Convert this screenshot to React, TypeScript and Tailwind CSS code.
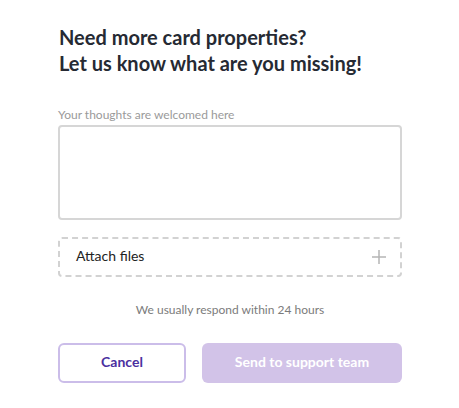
import React from "react";

export default function App() {
  return (
    <div className="w-[459px] h-[408px] bg-white" style={{ fontFamily: "Lato, 'Noto Sans', sans-serif" }}>
      <div className="w-[344px] ml-[58px] pt-[24px] flex flex-col">
        <h1 className="text-[20px] leading-[26px] font-bold text-[#262a33] pl-[1px]">
          Need more card properties?
          <br />
          Let us know what are you missing!
        </h1>
        <label className="mt-[31px] text-[12px] leading-[16px] text-[#9a9a9a]">Your thoughts are welcomed here</label>
        <textarea className="mt-[2px] h-[95px] w-full rounded-[4px] border-2 border-[#d6d6d6] resize-none outline-none" />
        <div className="mt-[17px] h-[40px] rounded-[4px] border-2 border-dashed border-[#d2d2d2] flex items-center justify-between pl-[16px] pr-[13px]">
          <span className="text-[14px] leading-[16px] text-[#222] -mt-[3px]">Attach files</span>
          <svg width="16" height="16" viewBox="0 0 16 16" fill="none" stroke="#b5b5b5" strokeWidth="1.5">
            <path d="M8 1v14M1 8h14" />
          </svg>
        </div>
        <p className="mt-[25px] text-center text-[12px] leading-[16px] text-[#7b7b7b]">We usually respond within 24 hours</p>
        <div className="mt-[25px] flex gap-[16px]">
          <button className="w-[128px] h-[40px] pb-[4px] rounded-[6px] border-2 border-[#cbbde9] bg-white text-[14px] font-bold text-[#4b2fa0]">Cancel</button>
          <button className="flex-1 h-[40px] pb-[4px] rounded-[6px] bg-[#d2c3e8] text-[14px] font-bold text-white">Send to support team</button>
        </div>
      </div>
    </div>
  );
}
